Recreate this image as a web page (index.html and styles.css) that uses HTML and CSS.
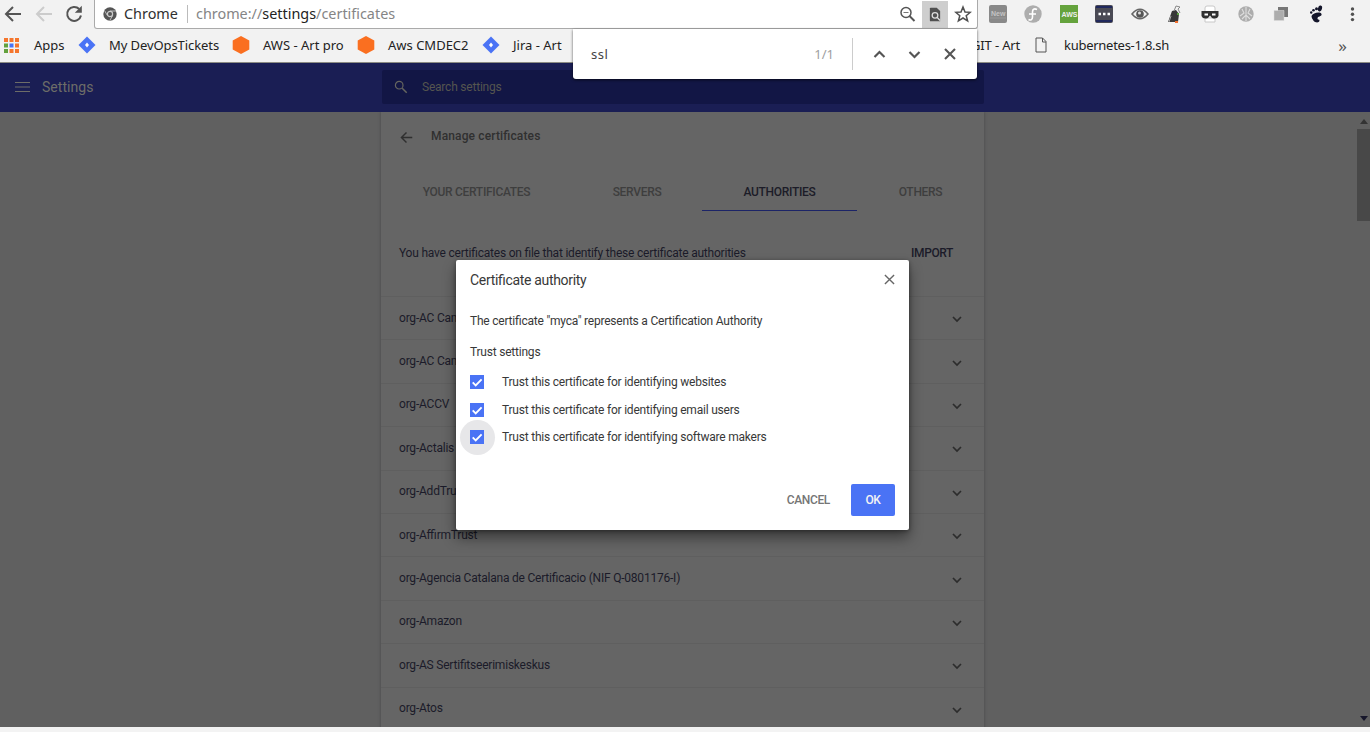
FILE: index.html
```
<!DOCTYPE html>
<html lang="en">
<head>
<meta charset="utf-8">
<title>Settings - Manage certificates</title>
<link rel="stylesheet" href="styles.css">
</head>
<body>
<svg class="defs" width="0" height="0">
  <symbol id="chevron" viewBox="0 0 12 12"><path d="M2 4l4 4 4-4" fill="none" stroke="currentColor" stroke-width="1.7"/></symbol>
  <symbol id="cross" viewBox="0 0 12 12"><path d="M1 1l10 10M11 1L1 11" fill="none" stroke="currentColor"/></symbol>
  <symbol id="arrow" viewBox="0 0 18 18"><path d="M17 9H2M9 2L2 9l7 7" fill="none" stroke="currentColor"/></symbol>
  <symbol id="check" viewBox="0 0 14 14"><path d="M2.700 7.300l3 3 5.900-6" fill="none" stroke="#fff" stroke-width="1.900"/></symbol>
  <symbol id="diamond" viewBox="0 0 18 18"><path d="M9 .5L17.500 9 9 17.500.5 9z" fill="#4a73f5"/><path d="M9 6.500L11 9l-2 2.500L7 9z" fill="#fff"/></symbol>
  <symbol id="hexagon" viewBox="0 0 18 18"><path d="M9 0l8.300 4.500v9L9 18 .7 13.500v-9z" fill="#fa6f20"/></symbol>
</svg>

<header class="browser">
  <div class="toolbar">
    <nav class="nav">
      <svg class="nav-icon back"><use href="#arrow"/></svg>
      <svg class="nav-icon forward"><use href="#arrow"/></svg>
      <svg class="nav-icon reload" viewBox="0 0 18 18"><path d="M14.200 4A7 7 0 1 0 16 10.500" fill="none" stroke="currentColor" stroke-width="2"/><path d="M16.800.8v7h-7z" fill="currentColor"/></svg>
    </nav>
    <div class="omnibox">
      <svg class="site-icon" viewBox="0 0 14 14"><circle cx="7" cy="7" r="6.700" fill="#555"/><path d="M7 4h6M4.400 8.500L1.500 3.500M9.600 8.500L6.800 13.500" stroke="#bbb"/><circle cx="7" cy="7" r="2.600" fill="#555" stroke="#ccc" stroke-width="1.200"/></svg>
      <span class="site-name">Chrome</span>
      <span class="url">chrome://<b>settings</b>/certificates</span>
      <svg class="omni-icon" viewBox="0 0 18 18"><circle cx="7" cy="7.500" r="5" fill="none" stroke="#555" stroke-width="1.500"/><path d="M10.500 11l5 5" stroke="#555" stroke-width="2"/><path d="M4.500 7.500h5" stroke="#777"/></svg>
      <span class="omni-active"><svg width="12" height="15" viewBox="0 0 14 16"><path d="M2 0h7l4 4v12H2a1 1 0 0 1-1-1V1a1 1 0 0 1 1-1z" fill="#505050"/><circle cx="7" cy="9" r="3.300" fill="none" stroke="#ddd" stroke-width="1.500"/><path d="M9 11l4 4" stroke="#ddd" stroke-width="1.500"/></svg></span>
      <svg class="omni-icon star" viewBox="0 0 18 18"><path d="M9 2l2 5 5.300.3-4.100 3.400 1.400 5.200L9 13l-4.600 2.900 1.400-5.200L1.700 7.300 7 7z" fill="none" stroke="#505050" stroke-width="1.500"/></svg>
    </div>
    <div class="extensions">
      <svg viewBox="0 0 18 18"><rect width="18" height="18" rx="2" fill="#898989"/><text x="2" y="11" class="tiny dim">New</text><path d="M1 13h16" stroke="#999"/></svg>
      <svg viewBox="0 0 18 18"><circle cx="9" cy="9" r="8.700" fill="#adadad"/><path d="M13 4.500c-3-1.500-4.500 0-4.500 2.500v5c0 3-2 3.500-4 2.500M5 9h7" stroke="#fff" stroke-width="1.600" fill="none"/></svg>
      <svg viewBox="0 0 18 18"><rect width="18" height="18" fill="#65a33d"/><text x="1.500" y="12" class="tiny">AWS</text></svg>
      <svg viewBox="0 0 18 18"><rect width="18" height="18" rx="2" fill="#4a4a54"/><path d="M1 2h16M1 16h16" stroke="#20285c" stroke-width="2"/><path d="M3.500 9h2.500M8 9h2.500M12.500 9H15" stroke="#fff" stroke-width="2.500"/></svg>
      <svg viewBox="0 0 18 18"><path d="M1 9Q9-.5 17 9 9 18.500 1 9z" fill="none" stroke="#666" stroke-width="1.600"/><circle cx="9" cy="9" r="3.800" fill="#555"/><circle cx="8.500" cy="8" r="1.500" fill="#ddd"/></svg>
      <svg viewBox="0 0 18 18"><path d="M2 17l4-11 4-1 3 4-1 8z" fill="#383838"/><path d="M8 6l2-5 4 1-2 2 2 4" fill="none" stroke="#888"/><path d="M3 17l2-6" stroke="#aaa"/><path d="M11 9h2" stroke="#579c3e" stroke-width="2"/><path d="M9 17h3" stroke="#f07030" stroke-width="2"/></svg>
      <svg viewBox="0 0 18 18"><path d="M4 7V3a2 2 0 0 1 2-2h6a2 2 0 0 1 2 2v4M4 13h10v4H4z" fill="#fff" stroke="#c8c8c8"/><path d="M.5 6h17v5q-1 3-5 2.500-2-.5-3.500-3-1.500 2.500-3.500 3-4 .5-5-2.500z" fill="#303030"/><path d="M3.500 9.500H7M11 9.500h3.500" stroke="#fff" stroke-width="2"/></svg>
      <svg viewBox="0 0 18 18"><circle cx="9" cy="9" r="7.700" fill="#adadad"/><path d="M9 2v14M5 4l2 4-4 3M13 4l-2 4 4 3M5 14l4-4 4 4" fill="none" stroke="#dedede" stroke-width="1.100"/></svg>
      <svg viewBox="0 0 18 18"><path d="M6 2h10v10H6z" fill="#777"/><path d="M2 5.500h10v10H2z" fill="#adadad" stroke="#ddd" stroke-width=".5"/></svg>
      <svg viewBox="0 0 18 18"><g fill="#14162b"><ellipse cx="12" cy="3.500" rx="2" ry="3" transform="rotate(15 12 3.500)"/><circle cx="8.500" cy="3.800" r="1.500"/><circle cx="5.500" cy="5.200" r="1.300"/><circle cx="3.200" cy="7.500" r="1.200"/><path d="M3.500 11c1.500-3.500 9-4.500 10-2 .8 3-4 2-4 4.500 0 1.500 2 .5 2 2.200-.5 2.500-4.500 2-6 0-1-1.700-2-2.700-2-4.700z"/></g></svg>
      <svg viewBox="0 0 18 18"><g fill="#505050"><circle cx="9.500" cy="4" r="1.700"/><circle cx="9.500" cy="9.300" r="1.700"/><circle cx="9.500" cy="14.600" r="1.700"/></g></svg>
    </div>
  </div>
  <div class="bookmarks">
    <span class="bm bm-apps"><svg viewBox="0 0 15 15"><path fill="#f5762d" d="M0 0h4v4H0zM5.500 0h4v4h-4zM11 0h4v4h-4zM11 5.500h4v4h-4zM5.500 11h4v4h-4zM11 11h4v4h-4z"/><path fill="#63a13e" d="M0 5.500h4v4H0zM0 11h4v4H0z"/><path fill="#4a73f5" d="M5.500 5.500h4v4h-4z"/></svg><span>Apps</span></span>
    <span class="bm bm-tickets"><svg><use href="#diamond"/></svg><span>My DevOpsTickets</span></span>
    <span class="bm bm-pro"><svg><use href="#hexagon"/></svg><span>AWS - Art pro</span></span>
    <span class="bm bm-cmd"><svg><use href="#hexagon"/></svg><span>Aws CMDEC2</span></span>
    <span class="bm bm-jira"><svg><use href="#diamond"/></svg><span>Jira - Art</span></span>
    <span class="bm bm-git"><span>GIT - Art</span></span>
    <span class="bm bm-file"><svg viewBox="0 0 12 16"><path d="M1 1h6.500L11 4.500V15H1zM7.500 1v4H11" fill="none" stroke="#555"/></svg><span>kubernetes-1.8.sh</span></span>
    <span class="bm-more">»</span>
  </div>
</header>

<div class="findbar">
  <span class="query">ssl</span><span class="count">1/1</span>
  <span class="find-actions">
    <svg class="up"><use href="#chevron"/></svg>
    <svg><use href="#chevron"/></svg>
    <svg class="close"><use href="#cross"/></svg>
  </span>
</div>

<div class="appbar">
  <svg class="menu" viewBox="0 0 15 12"><path d="M0 1.500h15M0 6h15M0 10.500h15" stroke="currentColor" stroke-width="1.200"/></svg>
  <h1>Settings</h1>
  <div class="search"><svg viewBox="0 0 14 14"><circle cx="5.200" cy="5.200" r="3.800" fill="none" stroke="currentColor" stroke-width="1.200"/><path d="M8.200 8.200l4.500 4.500" stroke="currentColor" stroke-width="1.500"/></svg><span>Search settings</span></div>
</div>

<main class="page">
  <section class="card">
    <div class="card-head"><svg><use href="#arrow"/></svg><h2>Manage certificates</h2></div>
    <div class="tabs"><span>YOUR CERTIFICATES</span><span>SERVERS</span><span class="selected">AUTHORITIES</span><span>OTHERS</span></div>
    <div class="intro"><span>You have certificates on file that identify these certificate authorities</span><span class="import">IMPORT</span></div>
    <ul class="orgs">
      <li><span>org-AC Cam</span><svg><use href="#chevron"/></svg></li>
      <li><span>org-AC Cam</span><svg><use href="#chevron"/></svg></li>
      <li><span>org-ACCV</span><svg><use href="#chevron"/></svg></li>
      <li><span>org-Actalis</span><svg><use href="#chevron"/></svg></li>
      <li><span>org-AddTrust</span><svg><use href="#chevron"/></svg></li>
      <li><span>org-AffirmTrust</span><svg><use href="#chevron"/></svg></li>
      <li><span>org-Agencia Catalana de Certificacio (NIF Q-0801176-I)</span><svg><use href="#chevron"/></svg></li>
      <li><span>org-Amazon</span><svg><use href="#chevron"/></svg></li>
      <li><span>org-AS Sertifitseerimiskeskus</span><svg><use href="#chevron"/></svg></li>
      <li><span>org-Atos</span><svg><use href="#chevron"/></svg></li>
    </ul>
  </section>
  <div class="scrollbar"><i class="tri-up"></i><i class="thumb"></i><i class="tri-down"></i></div>
</main>

<div class="dialog" role="dialog">
  <div class="dialog-head"><h3>Certificate authority</h3><svg><use href="#cross"/></svg></div>
  <p class="subject">The certificate "myca" represents a Certification Authority</p>
  <p class="group">Trust settings</p>
  <div class="option"><span class="box"><svg><use href="#check"/></svg></span><span>Trust this certificate for identifying websites</span></div>
  <div class="option"><span class="box"><svg><use href="#check"/></svg></span><span>Trust this certificate for identifying email users</span></div>
  <div class="option"><span class="box focused"><svg><use href="#check"/></svg></span><span>Trust this certificate for identifying software makers</span></div>
  <div class="actions"><span class="cancel">CANCEL</span><span class="ok">OK</span></div>
</div>
</body>
</html>
```

FILE: styles.css
```
* { box-sizing: border-box; }
body { margin: 0; width: 1370px; height: 732px; overflow: hidden; background: #f3f3f3; font-family: Roboto, sans-serif; font-size: 12px; letter-spacing: -.215px; font-feature-settings: "liga" 1; position: relative; }
h1, h2, h3, p, ul { margin: 0; padding: 0; font-weight: 400; }
svg { display: block; flex: none; }
.defs { position: absolute; }

.browser { height: 63px; background: #f2f2f2; border-bottom: 1px solid #8c8c84; font-family: "Noto Sans", sans-serif; color: #222; letter-spacing: 0; }
.toolbar { display: flex; height: 29px; }
.nav { width: 94px; display: flex; align-items: center; padding: 0 0 2px 4px; gap: 12.500px; }
.nav-icon { width: 18px; height: 18px; color: #555; stroke-width: 2; }
.forward { color: #ccc; }
.omnibox { width: 884px; background: #fff; border: 1px solid #aaa; border-top: 0; border-radius: 0 0 3px 3px; display: flex; align-items: center; padding-left: 8px; font-size: 14.400px; }
.site-icon { width: 14px; height: 14px; }
.site-name { width: 64px; margin-left: 7px; border-right: 1px solid #bbb; line-height: 18px; color: #303030; }
.url { margin-left: 8px; flex: 1; color: #858585; white-space: nowrap; line-height: 20px; }
.url b { font-weight: 400; color: #222; }
.omni-icon { width: 18px; height: 18px; }
.omni-active { width: 26px; height: 27px; background: #cecece; margin-left: 5px; display: flex; justify-content: center; align-items: center; }
.star { margin: 0 5px 0 6px; }
.extensions { flex: 1; display: flex; align-items: center; padding: 0 0 2px 11px; gap: 17.400px; }
.extensions svg { width: 18px; height: 18px; }
.tiny { font: 700 7px "Liberation Sans", sans-serif; fill: #eee; }
.dim { fill: #c4c4c4; }

.bookmarks { height: 33px; display: flex; align-items: center; font-size: 13px; padding: 0 0 1px 4px; white-space: nowrap; }
.bm { display: flex; align-items: center; gap: 14px; }
.bm-apps { width: 74px; gap: 15px; }
.bm svg { width: 18px; height: 18px; }
.bm.bm-apps svg { width: 15px; height: 15px; }
.bm-tickets { width: 154px; letter-spacing: -.08px; }
.bm-tickets svg { margin-right: -1px; }
.bm-pro { width: 125px; gap: 13px; }
.bm-cmd { width: 125px; }
.bm-jira { width: 489px; }
.bm-cmd, .bm-jira { gap: 13px; }
.bm-git { width: 64px; letter-spacing: -.15px; }
.bm-file { flex: 1; gap: 17px; letter-spacing: -.27px; }
.bm.bm-file svg { width: 12px; height: 16px; }
.bm-more { padding-right: 23px; font-size: 17px; color: #555; }

.findbar { position: absolute; z-index: 3; left: 573px; top: 29px; width: 404px; height: 50px; background: #fff; border-radius: 0 0 3px 3px; box-shadow: 0 1px 3px rgba(0,0,0,.65); display: flex; align-items: center; padding-left: 18px; font: 13px "Noto Sans", sans-serif; letter-spacing: 0; color: #444; }
.query { flex: 1; letter-spacing: .5px; }
.count { color: #a0a0a0; padding-right: 18px; }
.find-actions { border-left: 1px solid #ccc; height: 32px; width: 125px; display: flex; align-items: center; padding-left: 19px; gap: 20px; color: #555; }
.find-actions svg { width: 15px; height: 15px; }
.find-actions .up { transform: rotate(180deg); }
.find-actions .close { width: 12px; height: 12px; stroke-width: 2.100; margin-left: 2px; }

.appbar { height: 49px; background: #1a1e54; display: flex; align-items: center; color: #6d6d68; padding: 0 0 1px 15px; }
.menu { width: 15px; height: 12px; }
.appbar h1 { font-size: 14px; width: 340px; margin-left: 12px; letter-spacing: .05px; }
.search { width: 602px; height: 34px; background: #121645; display: flex; align-items: center; gap: 14px; padding-left: 12px; color: #55554f; border-radius: 2px; }
.search svg { width: 14px; height: 14px; color: #66665f; }

.page { height: 615px; background: #606060; display: flex; overflow: hidden; }
.card { width: 603px; height: 620px; margin-left: 381px; background: #656565; box-shadow: 0 0 3px #47474a; color: #1b1b29; }
.card-head { height: 48px; display: flex; align-items: center; gap: 17px; padding-left: 19px; }
.card-head svg { width: 13px; height: 13px; margin-top: 3px; color: #2f2f2f; stroke-width: 2; }
.card-head h2 { font-size: 12px; letter-spacing: .14px; font-weight: 500; color: #303030; padding-left: 1px; }
.tabs { display: grid; grid-template-columns: 191px 130px 155px 127px; margin-top: 13px; height: 38px; color: #3e3e3e; font-weight: 500; letter-spacing: -.3px; text-align: center; }
.tabs span { line-height: 39px; height: 38px; }
.tabs .selected { color: #1c1c28; border-bottom: 1px solid #1c2467; }
.intro { height: 85px; display: flex; justify-content: space-between; padding: 35px 31px 0 18px; line-height: 15px; }
.import { font-weight: 500; letter-spacing: -.4px; }
.orgs { list-style: none; }
.orgs li { height: 43.400px; border-top: 1px solid #5f5f5f; display: flex; align-items: center; justify-content: space-between; padding: 0 21px 1px 18px; }
.orgs svg { width: 12px; height: 12px; margin-top: 3px; color: #2c2c2c; }
.scrollbar { margin-left: auto; width: 13px; display: flex; flex-direction: column; align-items: center; padding-top: 7px; }
.tri-up, .tri-down { border: 4px solid transparent; height: 0; }
.tri-up { border-top: 0; border-bottom: 5px solid #333; }
.thumb { width: 13px; height: 92px; margin-top: 5px; background: #484848; }
.tri-down { border-bottom: 0; border-top: 5px solid #17172b; margin: auto 0 6px; }

.dialog { position: absolute; z-index: 2; left: 456px; top: 260px; width: 453px; height: 270px; background: #fff; border-radius: 2px; box-shadow: 0 8px 14px rgba(0,0,0,.42), 0 1px 4px rgba(0,0,0,.4); padding: 12px 14px; color: #383838; }
.dialog-head { display: flex; justify-content: space-between; line-height: 16px; }
.dialog-head h3 { font-size: 14px; letter-spacing: -.32px; }
.dialog-head svg { width: 11px; height: 11px; margin-top: 2px; stroke-width: 1.500; color: #666; }
.subject { margin-top: 25px; line-height: 16px; }
.group { margin-top: 15px; line-height: 16px; }
.option { display: flex; align-items: center; gap: 18px; height: 27.700px; }
.group + .option { margin-top: 8px; }
.box { width: 14px; height: 14px; background: #4a73f5; }
.box svg { width: 14px; height: 14px; }
.focused { position: relative; }
.focused svg { position: relative; background: #4a73f5; }
.focused::before { content: ""; position: absolute; left: -10px; top: -10px; width: 35px; height: 35px; border-radius: 50%; background: #e7e7e9; }
.actions { display: flex; justify-content: flex-end; align-items: center; margin-top: 32.500px; gap: 21px; font-weight: 500; color: #757575; }
.cancel { letter-spacing: -.35px; }
.ok { width: 44px; height: 32px; line-height: 32px; border-radius: 2px; background: #4a73f5; color: #f4f4f4; text-align: center; letter-spacing: -.5px; }
```
